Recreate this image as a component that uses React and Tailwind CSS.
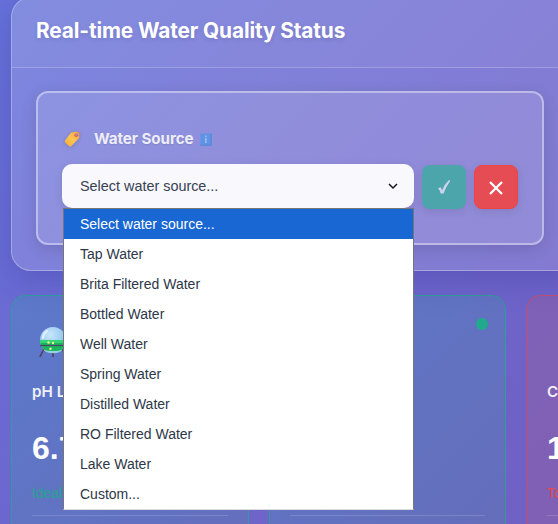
const options = [
  "Select water source...",
  "Tap Water",
  "Brita Filtered Water",
  "Bottled Water",
  "Well Water",
  "Spring Water",
  "Distilled Water",
  "RO Filtered Water",
  "Lake Water",
  "Custom...",
];

function TagIcon() {
  return (
    <svg width="20" height="18" viewBox="0 0 20 18" className="drop-shadow-sm">
      <defs>
        <linearGradient id="tag" x1="1" y1="0" x2="0" y2="1">
          <stop offset="0" stopColor="#f5a040" />
          <stop offset="0.5" stopColor="#ffc650" />
          <stop offset="1" stopColor="#f8a934" />
        </linearGradient>
      </defs>
      <path d="M10.2 2.2 15 1.8Q16.4 1.8 16.6 3L17.4 6.8Q17.4 7.7 16.7 8.4L9.4 16Q8.2 17 7 16L3.2 12.6Q2.2 11.5 3.2 10.2L8.8 2.9Q9.4 2.3 10.2 2.2Z" fill="url(#tag)" />
      <circle cx="14.2" cy="5.2" r="1.8" fill="#d95f62" />
      <circle cx="14.2" cy="5.2" r="0.8" fill="#8e8fd8" />
      <path d="M14.2 5C14.9 2 18 1.5 18.1 3.2S17 5.5 15.6 6.2" fill="none" stroke="#c98591" strokeWidth="0.7" />
    </svg>
  );
}

function InfoIcon() {
  return (
    <svg width="12" height="13" viewBox="0 0 12 13" className="block">
      <rect x="0.3" y="0.5" width="11.2" height="12" rx="0.8" fill="#5f94e4" />
      <path d="M0.3 11.7h11.2v0.8H0.3zM10.8 0.5h.7v12h-.7z" fill="#4d7fd2" />
      <path d="M5.9 5V10" fill="none" stroke="#b9cef5" strokeWidth="1.1" />
      <circle cx="5.9" cy="3.2" r="0.7" fill="#b9cef5" />
    </svg>
  );
}

function BeakerIcon() {
  return (
    <svg width="30" height="34" viewBox="0 0 30 34" className="block">
      <defs>
        <radialGradient id="globe" cx="0.4" cy="0.3" r="0.7">
          <stop offset="0" stopColor="#c9e6fb" />
          <stop offset="1" stopColor="#83bdeb" />
        </radialGradient>
        <clipPath id="globeClip">
          <circle cx="14" cy="14" r="13" />
        </clipPath>
      </defs>
      <path d="M6 21 .8 31M22 21l6 10M14 24v7" stroke="#553867" strokeWidth="1.6" />
      <circle cx="14" cy="14" r="13" fill="url(#globe)" />
      <g clipPath="url(#globeClip)">
        <path d="M0 14h28V25H0z" fill="#1bb55e" />
        <path d="M0 14h28V17H0z" fill="#31d574" />
      </g>
      <path d="M4 23.5q10 3 20 0l-3 2.5q-7 2.5-14 0z" fill="#9bd9da" opacity=".8" />
      <path d="M1 19.5h26" stroke="#494666" strokeWidth="1.3" />
      <path d="M8 5q-4 3-4 7" fill="none" stroke="#e2f4ff" strokeWidth="2" strokeLinecap="round" />
      <circle cx="9.6" cy="16.5" r="1.3" fill="#ebf58a" />
      <circle cx="14" cy="17" r="1.2" fill="#ebf58a" />
      <circle cx="11.5" cy="22.8" r="1.2" fill="#ebf58a" />
    </svg>
  );
}

function StatusPanel() {
  return (
    <section className="-mt-[3px] h-[274px] w-[570px] shrink-0 rounded-[20px] border border-white/30 bg-white/15 shadow-[0_8px_32px_rgba(31,38,135,0.25)]">
      <header className="flex h-[70px] items-center rounded-t-[19px] border-b border-white/20 bg-white/5 pl-6">
        <h1 className="-mt-[3px] text-[20.8px] font-bold tracking-[-0.1px] whitespace-nowrap text-white [text-shadow:0_2px_4px_rgba(0,0,0,0.1)]">
          Real-time Water Quality Status
        </h1>
      </header>
      <div className="ml-6 mt-[23px] h-[154px] w-[508px] rounded-xl border-2 border-white/40 bg-white/12 px-6 pt-[34px] shadow-[0_4px_16px_rgba(0,0,0,0.12)]">
        <div className="flex h-6 items-center">
          <TagIcon />
          <span className="ml-3 text-[15.2px] font-bold tracking-[-0.08px] whitespace-nowrap text-white/85 [text-shadow:0_1px_2px_rgba(0,0,0,0.1)]">
            Water Source
          </span>
          <span className="ml-1.5">
            <InfoIcon />
          </span>
        </div>
        <div className="mt-3 flex items-center gap-2">
          <div className="relative h-11 w-[352px] rounded-[10px] bg-[#f8f8fd] shadow-[0_2px_8px_rgba(0,0,0,0.1)]">
            <div className="flex h-full items-center justify-between pr-[15px] pl-[18px] font-['Liberation_Sans',Arial,sans-serif] text-[14.4px] text-[#374151]">
              <span className="pt-0.5">Select water source...</span>
              <svg width="12" height="8" viewBox="0 0 12 8" fill="none" stroke="#171717" strokeWidth="1.5">
                <path d="M2 2 6 6 10 2" />
              </svg>
            </div>
            <ul className="absolute top-[44px] left-[1px] z-20 h-[302px] w-[351px] border border-[#767676] border-b-[#dddddd] bg-white font-['Liberation_Sans',Arial,sans-serif] text-[14px] text-[#2d3748]">
              {options.map((option, i) => (
                <li
                  key={option}
                  className={`flex h-[30px] items-center pl-4 whitespace-nowrap ${i === 0 ? "bg-[#1967d2] text-white" : ""}`}
                >
                  {option}
                </li>
              ))}
            </ul>
          </div>
          <button className="mt-0.5 flex size-11 items-center justify-center rounded-lg bg-[#4ba5aa] shadow-[0_2px_8px_rgba(0,0,0,0.1)]">
            <svg width="14" height="16" viewBox="0 0 14 16">
              <path d="M1 9.2 3.7 8.2 5.1 11.2Q7.6 5 12 1L13.3 1.8Q9.1 7.5 6.6 14.6H3.7Q2.8 11 1 9.2Z" fill="#cbd3ee" />
            </svg>
          </button>
          <button className="mt-0.5 flex size-11 items-center justify-center rounded-lg border border-[#ef4444] bg-[#e64c53] shadow-[0_2px_8px_rgba(0,0,0,0.1)]">
            <svg width="14" height="14" viewBox="0 0 14 14" className="mt-0.5" stroke="#fff" strokeWidth="2.3">
              <path d="M1 1 13 13M13 1 1 13" />
            </svg>
          </button>
        </div>
      </div>
    </section>
  );
}

function MetricCard({ icon, label, value, status, tone }) {
  const good = tone === "good";
  return (
    <article
      className={`h-[260px] w-[237.5px] shrink-0 rounded-[15px] border pl-5 pr-5 ${good ? "border-[#10b981]/60 bg-[linear-gradient(135deg,#5087c180,#5a7ab080)]" : "border-[#ef4444]/60 bg-[#9060a5]/50"}`}
    >
      <div className="flex h-[84px] justify-between pt-[22px]">
        <span className="mt-[8px] ml-[7px]">{icon}</span>
        <span className={`-mr-[3px] size-3 rounded-full ${good ? "bg-[#20aa8c]" : "bg-[#ef4444]"}`} />
      </div>
      <p className="h-6 text-[15.2px] leading-6 font-semibold whitespace-nowrap text-white/90">{label}</p>
      <p className="mt-6 h-10 font-['Liberation_Sans',Arial,sans-serif] text-[32px] leading-10 font-bold whitespace-nowrap text-white">{value}</p>
      <p className={`mt-[15px] h-5 font-['Liberation_Sans',Arial,sans-serif] text-[14px] leading-5 ${good ? "text-[#20a58e]" : "text-[#e5484d]"}`}>
        {status}
      </p>
      <div className="mt-3 h-px bg-white/15" />
    </article>
  );
}

export default function App() {
  return (
    <main className="flex h-[524px] w-[558px] flex-col overflow-hidden bg-[linear-gradient(135deg,#6672da_0%,#6c67cf_48%,#7060c3_100%)] pl-[11px] font-[Inter,sans-serif]">
      <div className="relative z-10 flex">
        <StatusPanel />
      </div>
      <div className="mt-6 flex gap-5">
        <MetricCard icon={<BeakerIcon />} label="pH Level" value="6.7" status="Ideal" tone="good" />
        <MetricCard label="" value="" status="" tone="good" />
        <MetricCard label="Chlorine" value="1.2" status="Too High" tone="bad" />
      </div>
    </main>
  );
}
